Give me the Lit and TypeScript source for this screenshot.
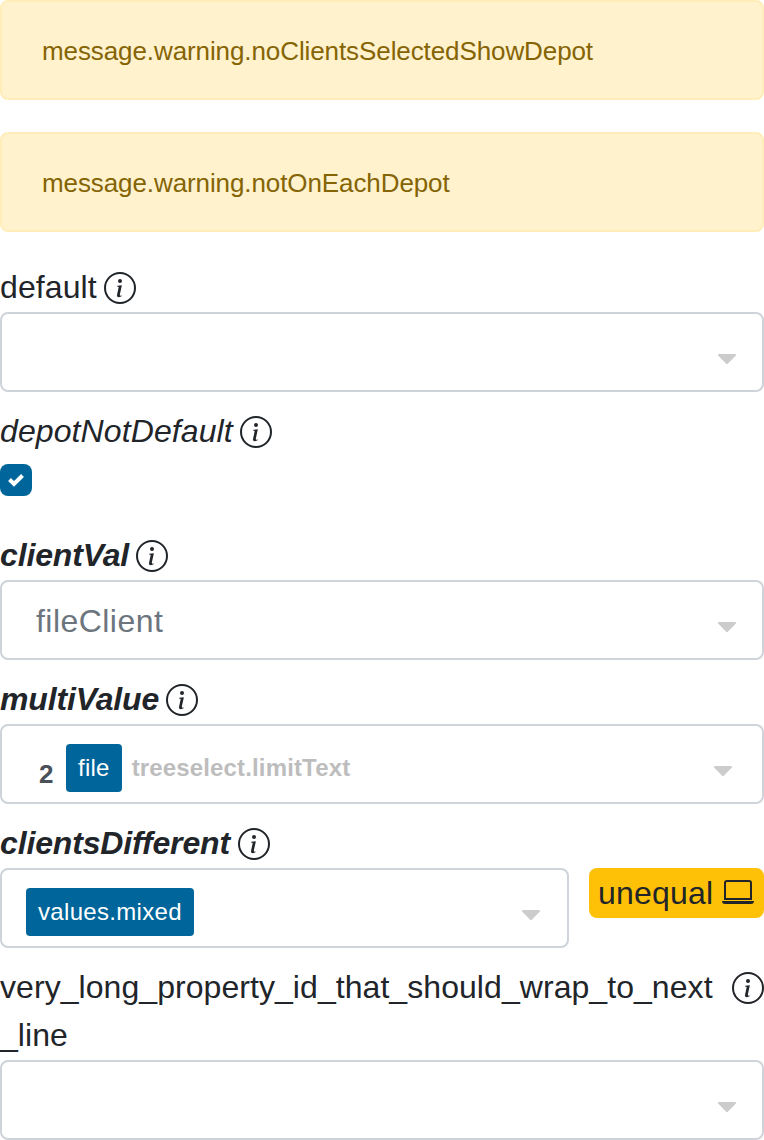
import { LitElement, html, css, svg } from "lit";
import { customElement, property } from "lit/decorators.js";
import { classMap } from "lit/directives/class-map.js";

const infoIcon = svg`<path d="M8 15A7 7 0 1 1 8 1a7 7 0 0 1 0 14zm0 1A8 8 0 1 0 8 0a8 8 0 0 0 0 16z"/><path d="m8.93 6.588-2.29.287-.082.38.45.083c.294.07.352.176.288.469l-.738 3.468c-.194.897.105 1.319.808 1.319.545 0 1.178-.252 1.465-.598l.088-.416c-.2.176-.492.246-.686.246-.275 0-.375-.193-.304-.533L8.93 6.588zM9 4.5a1 1 0 1 1-2 0 1 1 0 0 1 2 0z"/>`;
const laptopIcon = svg`<path d="M13.5 3a.5.5 0 0 1 .5.5V11H2V3.5a.5.5 0 0 1 .5-.5h11zm-11-1A1.5 1.5 0 0 0 1 3.5V12h14V3.5A1.5 1.5 0 0 0 13.5 2h-11zM0 12.5h16a1.5 1.5 0 0 1-1.5 1.5h-13A1.5 1.5 0 0 1 0 12.5z"/>`;

@customElement("property-label")
class PropertyLabel extends LitElement {
  @property() name = "";
  @property() kind = "";
  static styles = css`
    :host { display: flex; line-height: 48px; color: #212529; }
    .name { margin: -1px 0 1px; word-break: break-all; letter-spacing: 0.1px; }
    .wrapping { padding-right: 8px; letter-spacing: 0.06px; }
    .depot { font-style: italic; letter-spacing: 0.1px; }
    .client { font-style: italic; font-weight: 700; letter-spacing: -0.15px; }
    .icon { flex: none; width: 32px; height: 32px; margin: 8px 0 0 auto; fill: currentColor; }
    .inline { margin-left: 7.2px; }
    :host([wide]) .inline { margin-left: 8.2px; }
  `;
  render() {
    const long = this.name.length >= 30;
    return html`<span class=${classMap({ name: true, wrapping: long, depot: this.kind === "depot", client: this.kind === "client" })}>${this.name}</span>
      <svg class=${classMap({ icon: true, inline: !long })} viewBox="0 0 16 16">${infoIcon}</svg>`;
  }
}

@customElement("tree-select")
class TreeSelect extends LitElement {
  @property({ type: Boolean, reflect: true }) multiple = false;
  static styles = css`
    :host { display: flex; box-sizing: border-box; height: 80px; border: 2px solid #ced4da; border-radius: 8px; padding-right: 26px; background: #fff; }
    :host([multiple]) { padding-right: 30px; }
    .content { flex: 1; min-width: 0; display: flex; }
    .arrow { flex: none; width: 18px; height: 18px; margin-top: 36px; fill: #ccc; }
  `;
  render() {
    return html`<div class="content"><slot></slot></div>
      <svg class="arrow" viewBox="0 0 292.362 292.362"><path d="M286.935 69.377c-3.614-3.617-7.898-5.424-12.848-5.424H18.274c-4.952 0-9.233 1.807-12.85 5.424C1.807 72.998 0 77.279 0 82.228c0 4.948 1.807 9.229 5.424 12.847l127.907 127.907c3.621 3.617 7.902 5.428 12.85 5.428s9.233-1.811 12.847-5.428L286.935 95.074c3.613-3.617 5.427-7.898 5.427-12.847 0-4.948-1.814-9.229-5.427-12.85z"/></svg>`;
  }
}

@customElement("app-root")
class AppRoot extends LitElement {
  static styles = css`
    :host { display: block; width: 764px; height: 1140px; background: #fff; color: #212529; font: 32px/48px "Liberation Sans", Arial, sans-serif; }
    .alert { box-sizing: border-box; height: 100px; margin-bottom: 32px; padding: 30px 40px 27px; border: 2px solid #ffeeba; border-radius: 8px; background: #fff2cd; color: #856404; font-size: 26px; line-height: 39px; letter-spacing: -0.095px; }
    .field { margin-bottom: 16px; }
    .check { height: 52px; box-sizing: border-box; padding-top: 8px; margin-bottom: 24px; }
    .box { display: grid; place-items: center; width: 32px; height: 32px; border-radius: 8px; background: #00659a; }
    .tick { width: 16px; height: 14px; fill: none; stroke: #fff; stroke-width: 4; }
    .single { padding-left: 34px; line-height: 78px; color: #6c757d; letter-spacing: 0.45px; }
    .count { width: 15px; margin: 29px 12px 0 37px; font-size: 26px; line-height: 39px; font-weight: 700; color: #495057; }
    .chip { box-sizing: border-box; height: 48px; margin-top: 18px; padding: 0 12px; border-radius: 4px; background: #00659a; color: #fff; font-size: 24px; line-height: 48px; letter-spacing: 0.24px; }
    .mixed { margin-left: 24px; letter-spacing: 0.32px; }
    .limit { margin: 18px 0 0 10px; font-size: 24px; line-height: 48px; font-weight: 700; color: #bdbdbd; letter-spacing: 0.15px; }
    .row { display: flex; justify-content: space-between; align-items: flex-start; }
    .narrow { width: 569px; padding-right: 27px; }
    .badge { box-sizing: border-box; display: flex; align-items: center; justify-content: space-between; width: 175px; height: 50px; padding: 0 10px 0 9px; border-radius: 8px; background: #ffc107; letter-spacing: 0.2px; }
    .laptop { width: 32px; height: 32px; margin-bottom: 2px; fill: #212529; }
  `;
  render() {
    return html`
      <div class="alert">message.warning.noClientsSelectedShowDepot</div>
      <div class="alert">message.warning.notOnEachDepot</div>
      <div class="field">
        <property-label name="default"></property-label>
        <tree-select></tree-select>
      </div>
      <div class="field">
        <property-label name="depotNotDefault" kind="depot"></property-label>
        <div class="check"><div class="box"><svg class="tick" viewBox="0 0 16 14"><path d="M1.5 6.5 6 11 14.5 2.5"/></svg></div></div>
      </div>
      <div class="field">
        <property-label name="clientVal" kind="client"></property-label>
        <tree-select><span class="single">fileClient</span></tree-select>
      </div>
      <div class="field">
        <property-label name="multiValue" kind="client"></property-label>
        <tree-select multiple><span class="count">2</span><span class="chip">file</span><span class="limit">treeselect.limitText</span></tree-select>
      </div>
      <div class="field">
        <property-label name="clientsDifferent" kind="client" wide></property-label>
        <div class="row">
          <tree-select class="narrow"><span class="chip mixed">values.mixed</span></tree-select>
          <div class="badge">unequal<svg class="laptop" viewBox="0 0 16 16">${laptopIcon}</svg></div>
        </div>
      </div>
      <div>
        <property-label name="very_long_property_id_that_should_wrap_to_next_line"></property-label>
        <tree-select></tree-select>
      </div>`;
  }
}
